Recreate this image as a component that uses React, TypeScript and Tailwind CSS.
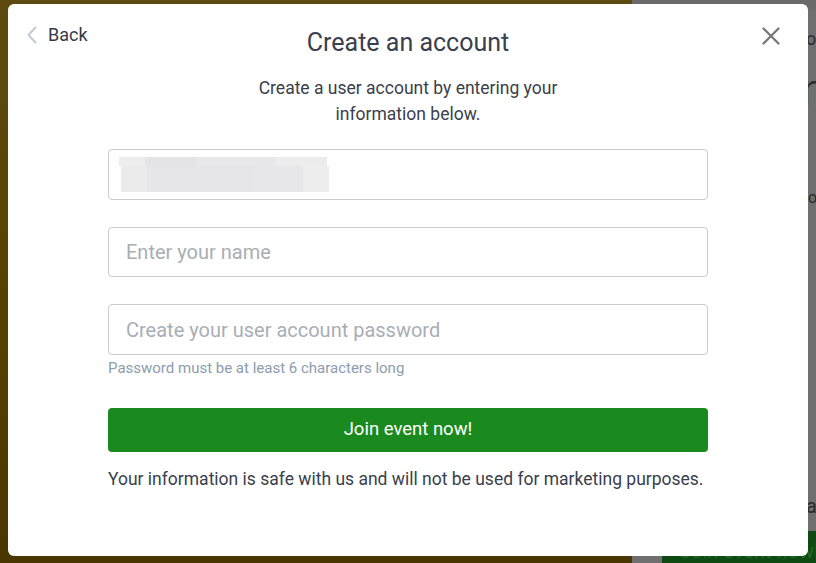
import React from 'react';

const font = { fontFamily: 'Roboto, "Liberation Sans", sans-serif' };

const Backdrop: React.FC = () => (
    <div className="absolute inset-0 flex">
        <div className="w-[632px] shrink-0 h-full bg-gradient-to-b from-[#5c4a10] via-[#574300] to-[#4a3600]" />
        <div className="flex-1 h-full bg-[#6f6f6f] flex flex-col text-[#2a2a2a]">
            <div className="h-[10px] bg-[#6a6a6a]" />
            <div className="pl-[174px] pt-[20px] text-[18px] leading-none">or</div>
            <div className="pl-[170px] pt-[20px] text-[44px] leading-none font-light">r</div>
            <div className="pl-[176px] pt-[78px] text-[16px] leading-none">o</div>
            <div className="pl-[174px] pt-[290px] text-[20px] leading-none">a</div>
            <div className="mt-auto ml-[30px] h-[32px] bg-[#0f4a12] text-[#1e6a22] text-[20px] pl-[18px] leading-[40px] overflow-hidden whitespace-nowrap">
                Join event now!
            </div>
        </div>
    </div>
);

const App: React.FC = () => {
    return (
        <div className="relative w-[816px] h-[563px] overflow-hidden" style={font}>
            <Backdrop />
            <div className="absolute left-[8px] top-[4px] w-[800px] h-[552px] bg-white rounded-[6px] flex flex-col items-center">
                <button className="absolute left-[19px] top-[22px] flex items-center gap-[11px] text-[18px] text-[#343a48]">
                    <svg width="10" height="18" viewBox="0 0 10 18" fill="none">
                        <path d="M8.5 1.5 L1.5 9 L8.5 16.5" stroke="#c3cad4" strokeWidth="2" strokeLinecap="round" strokeLinejoin="round" />
                    </svg>
                    <span className="leading-none">Back</span>
                </button>
                <button className="absolute right-[27px] top-[22px] w-[20px] h-[20px] flex items-center justify-center">
                    <svg width="18" height="18" viewBox="0 0 18 18" fill="none">
                        <path d="M1.5 1.5 L16.5 16.5 M16.5 1.5 L1.5 16.5" stroke="#777777" strokeWidth="2.3" strokeLinecap="round" />
                    </svg>
                </button>

                <h2 className="mt-[24px] text-[25px] leading-[30px] text-[#3a404c]">Create an account</h2>
                <p className="mt-[17px] w-[330px] text-center text-[17.5px] leading-[26px] text-[#3a404c]">
                    Create a user account by entering your information below.
                </p>

                <div className="mt-[22px] w-[600px] flex flex-col">
                    <div className="h-[51px] border border-[#cccccc] rounded-[4px] px-[10px] flex items-center">
                        <div className="flex flex-col">
                            <div className="flex">
                                <div className="w-[26px] h-[9px] bg-[#ededee]" />
                                <div className="w-[52px] h-[9px] bg-[#e4e4e6]" />
                                <div className="w-[78px] h-[9px] bg-[#e8e8ea]" />
                                <div className="w-[52px] h-[9px] bg-[#ececed]" />
                            </div>
                            <div className="flex ml-[2px]">
                                <div className="w-[26px] h-[26px] bg-[#ebebec]" />
                                <div className="w-[104px] h-[26px] bg-[#e6e6e8]" />
                                <div className="w-[52px] h-[26px] bg-[#e7e7e9]" />
                                <div className="w-[26px] h-[26px] bg-[#ededee]" />
                            </div>
                        </div>
                    </div>

                    <input
                        className="mt-[27px] h-[50px] border border-[#cccccc] rounded-[4px] px-[17px] text-[20px] text-[#3a404c] placeholder:text-[#a9aeb5] outline-none"
                        placeholder="Enter your name"
                    />

                    <input
                        type="password"
                        className="mt-[27px] h-[51px] border border-[#cccccc] rounded-[4px] px-[17px] text-[20px] text-[#3a404c] placeholder:text-[#a9aeb5] outline-none"
                        placeholder="Create your user account password"
                    />
                    <span className="mt-[3px] text-[15px] leading-[20px] text-[#8d9cae]">
                        Password must be at least 6 characters long
                    </span>

                    <button className="mt-[30px] h-[44px] rounded-[4px] bg-[#1a8a1f] text-white text-[18.5px]">
                        Join event now!
                    </button>
                    <p className="mt-[14px] text-[17.5px] leading-[26px] text-[#3a404c] whitespace-nowrap">
                        Your information is safe with us and will not be used for marketing purposes.
                    </p>
                </div>
            </div>
        </div>
    );
};

export default App;
